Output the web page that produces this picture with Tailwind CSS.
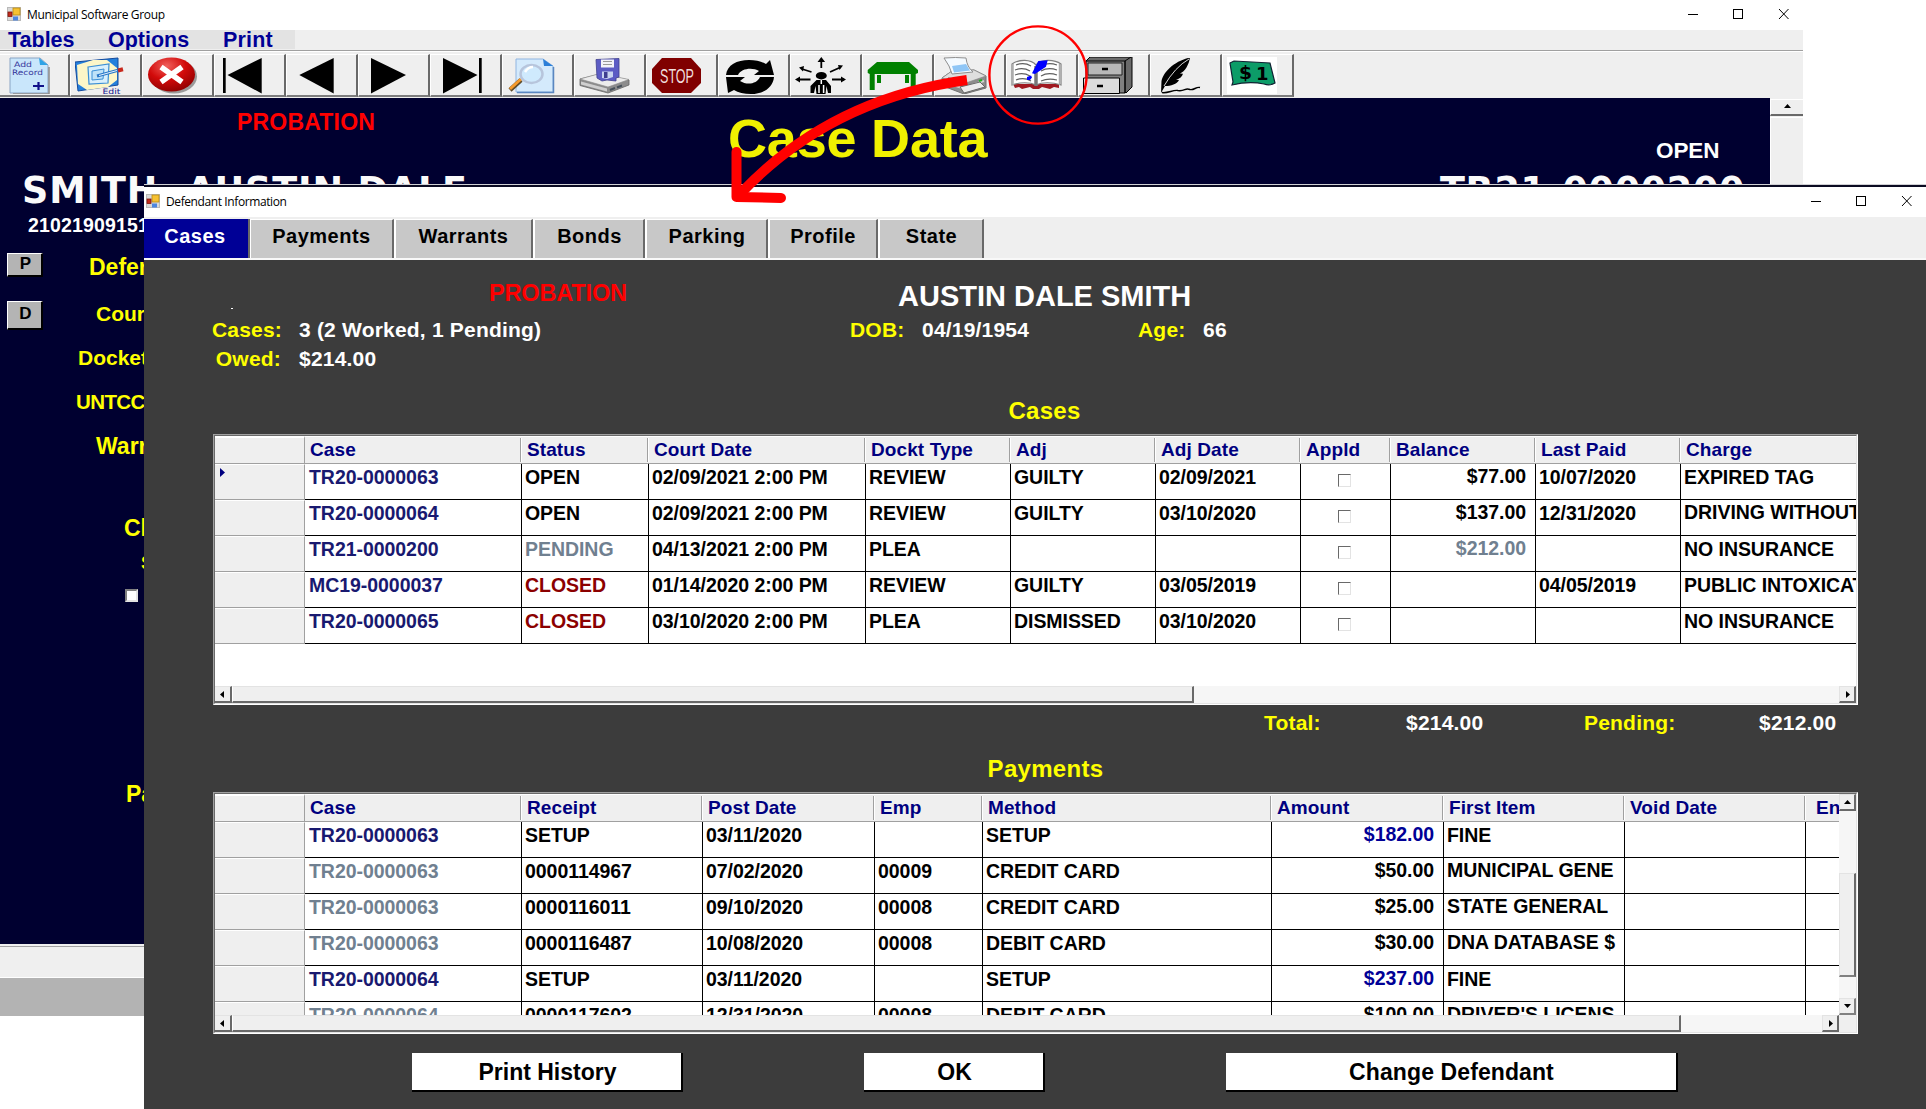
<!DOCTYPE html>
<html lang="en">
<head>
<meta charset="utf-8">
<title>Municipal Software Group</title>
<script src="https://cdn.jsdelivr.net/npm/@tailwindcss/browser@4"></script>
</head>
<body class="relative h-[1109px] w-[1926px] overflow-hidden bg-white font-['Liberation_Sans',Arial,sans-serif] font-bold whitespace-nowrap">

<!-- Main window -->
<section class="absolute left-0 top-0 flex h-[1016px] w-[1803px] flex-col overflow-hidden bg-white">
  <header class="flex h-[30px] shrink-0 items-center bg-white pl-[7px] font-['Open_Sans',sans-serif] text-[12px] font-normal text-black">
    <svg class="mb-[2px] h-[14px] w-[14px]" viewBox="0 0 14 14"><rect x=".5" y=".5" width="13" height="13" fill="#d8d8d8" stroke="#b9b9b9"/><rect x="6" y="1" width="7" height="7" fill="#f6c132" stroke="#b98a10" stroke-width=".8"/><rect x="1" y="5" width="4" height="4.500" fill="#c22a1c" stroke="#7f140c" stroke-width=".8"/><rect x="6" y="9.500" width="5" height="4" fill="#4d86e0"/></svg>
    <span class="ml-[6px] pb-[1px] tracking-[-0.34px]">Municipal Software Group</span>
    <svg class="mb-[3px] ml-auto mr-[14px] h-[12px] w-[102px]" viewBox="0 0 102 12" fill="none" stroke="#000" stroke-width="1"><path d="M1 6.500h10"/><rect x="46.500" y="1.500" width="9" height="9"/><path d="M92 1l9.500 10M101.500 1L92 11"/></svg>
  </header>
  <nav class="flex h-[20px] shrink-0 bg-[#efefef] text-[21.5px] leading-[21px] text-[#000096]">
    <div class="flex h-[19px] w-[295px] bg-[#e3e3e3]">
      <span class="ml-[8px] w-[100px]">Tables</span><span class="w-[115px]">Options</span><span class="tracking-[0.2px]">Print</span>
    </div>
  </nav>
  <div class="h-[2px] shrink-0 border-b border-t border-b-white border-t-[#a0a0a0]"></div>
  <div id="toolbar" class="flex h-[46px] shrink-0 bg-[#efefef] pt-[2px]">
  </div>

  <div class="flex h-[846px] shrink-0">
    <div class="flex w-[1770px] flex-col overflow-hidden bg-[#000030]">
      <div class="grid h-[72px] shrink-0 grid-cols-[237px_491px_928px_1fr]">
        <span></span>
        <span class="mt-[12px] text-[23px] leading-[24px] tracking-[0.2px] text-[#ff0000]">PROBATION</span>
        <h1 class="mt-[10px] text-[54px] leading-[60px] tracking-[-0.2px] text-[#f0f000]">Case Data</h1>
        <span class="mt-[41px] text-[22.5px] leading-[24px] tracking-[-0.1px] text-white">OPEN</span>
      </div>
      <div class="flex h-[44px] shrink-0 pl-[22px] pt-px font-['DejaVu_Sans',sans-serif] text-[36.5px] leading-[40px] text-[#fafafa]">
        <span class="w-[1418px] tracking-[0.9px]">SMITH, AUSTIN DALE</span><span class="tracking-[0.7px]">TR21-0000200</span>
      </div>
      <div class="pl-[28px] text-[19.5px] leading-[22px] tracking-[0.15px] text-white">210219091512</div>
      <div class="text-[#ffff00]">
        <div class="mt-[17px] flex h-[24px] pl-[7px]">
          <button class="h-[24px] w-[36px] border-b-2 border-r-2 border-b-black border-r-black border-l border-t border-l-white border-t-white bg-[#b4b4b4] pb-[2px] pl-[2px] text-[17px] leading-[17px] text-black">P</button>
          <span class="ml-[46px] pt-[2px] text-[23px] leading-[24px]">Defendant:</span>
        </div>
        <div class="mt-[24px] flex h-[29px] pl-[7px]">
          <button class="h-[29px] w-[36px] border-b-2 border-r-2 border-b-black border-r-black border-l border-t border-l-white border-t-white bg-[#b4b4b4] pb-[2px] pl-[2px] text-[17px] leading-[24px] text-black">D</button>
          <span class="ml-[53px] pt-px text-[21px] leading-[24px]">Court Date:</span>
        </div>
        <div class="mt-[16px] pl-[78px] text-[21px] leading-[24px]">Docket Type:</div>
        <div class="mt-[20px] pl-[76px] text-[20.5px] leading-[24px] tracking-[-0.6px]">UNTCC Number:</div>
        <div class="mt-[20px] pl-[96px] text-[23px] leading-[24px]">Warrant:</div>
        <div class="mt-[58px] pl-[124px] text-[23px] leading-[24px]">Charge:</div>
        <div class="mt-[13px] pl-[141px] text-[18px] leading-[20px]">Statute:</div>
        <div class="ml-[125px] mt-[16px] h-[13px] w-[13px] border-2 border-b-[#e3e3e3] border-l-[#808080] border-r-[#e3e3e3] border-t-[#808080] bg-white"></div>
        <div class="mt-[180px] pl-[126px] text-[23px] leading-[24px]">Payments:</div>
      </div>
    </div>
    <div class="flex w-[33px] flex-col bg-[#efefef] pt-[1px]">
      <div class="flex h-[17px] shrink-0 items-center justify-center border-b-2 border-l border-t border-b-[#696969] border-l-white border-t-white"><svg class="mb-[2px] h-[4px] w-[7px]" viewBox="0 0 7 4"><path d="M0 4L3.500 0 7 4z"/></svg></div>
      <div class="mt-[1px] grow border-l border-t border-white"></div>
    </div>
  </div>
  <div class="h-[3px] shrink-0 border-b border-b-[#a0a0a0] bg-[#efefef]"></div>
  <div class="h-[31px] shrink-0 border-b border-b-white bg-[#efefef]"></div>
  <div class="grow bg-[#b3b3b3]"></div>
</section>

<!-- Defendant window -->
<section class="absolute left-[144px] top-[184px] flex h-[925px] w-[1782px] flex-col overflow-hidden bg-[#3c3c3c]">
  <div class="h-[3px] shrink-0 border-t border-t-[#d0d0d4] bg-[#0b0b22]"></div>
  <header class="flex h-[30px] shrink-0 items-center bg-white pl-[2px] font-['Open_Sans',sans-serif] text-[12px] font-normal text-black">
    <svg class="mb-[2px] h-[14px] w-[14px]" viewBox="0 0 14 14"><rect x=".5" y=".5" width="13" height="13" fill="#d8d8d8" stroke="#b9b9b9"/><rect x="6" y="1" width="7" height="7" fill="#f6c132" stroke="#b98a10" stroke-width=".8"/><rect x="1" y="5" width="4" height="4.500" fill="#c22a1c" stroke="#7f140c" stroke-width=".8"/><rect x="6" y="9.500" width="5" height="4" fill="#4d86e0"/></svg>
    <span class="ml-[6px] pb-[1px] tracking-[-0.4px]">Defendant Information</span>
    <svg class="mb-[3px] ml-auto mr-[14px] h-[12px] w-[102px]" viewBox="0 0 102 12" fill="none" stroke="#000" stroke-width="1"><path d="M1 6.500h10"/><rect x="46.500" y="1.500" width="9" height="9"/><path d="M92 1l9.500 10M101.500 1L92 11"/></svg>
  </header>
  <nav class="flex h-[41px] shrink-0 items-start bg-[#efefef] pt-[2px] text-[20px] leading-[28px] tracking-[0.5px] text-black">
    <div class="h-[39px] w-[106px] border-r-2 border-r-[#696969] bg-[#000096] pr-[2px] pt-[3px] text-center text-white">Cases</div>
    <div class="h-[39px] w-[144px] border-l border-r-2 border-t border-l-white border-r-[#696969] border-t-white bg-[#c8c8c8] pt-[2px] text-center">Payments</div>
    <div class="h-[39px] w-[139px] border-l-2 border-r-2 border-t border-l-white border-r-[#696969] border-t-white bg-[#c8c8c8] pt-[2px] text-center">Warrants</div>
    <div class="h-[39px] w-[112px] border-l-2 border-r-2 border-t border-l-white border-r-[#696969] border-t-white bg-[#c8c8c8] pl-px pt-[2px] text-center">Bonds</div>
    <div class="h-[39px] w-[123px] border-l-2 border-r-2 border-t border-l-white border-r-[#696969] border-t-white bg-[#c8c8c8] pl-px pt-[2px] text-center">Parking</div>
    <div class="h-[39px] w-[110px] border-l-2 border-r-2 border-t border-l-white border-r-[#696969] border-t-white bg-[#c8c8c8] pt-[2px] text-center">Profile</div>
    <div class="h-[39px] w-[106px] border-l-2 border-r-2 border-t border-l-white border-r-[#696969] border-t-white bg-[#c8c8c8] pl-px pt-[2px] text-center">State</div>
  </nav>
  <div class="h-[2px] shrink-0 bg-[#f8f8f8]"></div>

  <div class="grid h-[58px] shrink-0 grid-cols-[87px_258px_409px_1fr] pt-[19px]">
    <span></span>
    <span class="mt-[29px] h-px w-[2px] bg-white"></span>
    <span class="mt-[2px] text-[23.5px] leading-[24px] tracking-[-0.15px] text-[#ff0000]">PROBATION</span>
    <span class="mt-px text-[29px] leading-[32px] text-white">AUSTIN DALE SMITH</span>
  </div>
  <div class="grid h-[29px] shrink-0 grid-cols-[138px_17px_551px_72px_216px_65px_1fr] text-[21px] leading-[24px] tracking-[0.2px] text-white">
    <span class="text-right text-[#ffff00]">Cases:</span><span></span><span>3 (2 Worked, 1 Pending)</span>
    <span class="text-[#ffff00]">DOB:</span><span>04/19/1954</span><span class="text-[#ffff00]">Age:</span><span>66</span>
  </div>
  <div class="grid h-[50px] shrink-0 grid-cols-[137px_18px_1fr] text-[21px] leading-[24px] tracking-[0.2px] text-white">
    <span class="text-right text-[#ffff00]">Owed:</span><span></span><span>$214.00</span>
  </div>
  <h2 class="h-[37px] shrink-0 pl-[19px] text-center text-[24px] leading-[28px] tracking-[0.3px] text-[#ffff00]">Cases</h2>

  <div class="ml-[69px] h-[271px] w-[1645px] shrink-0 border border-b-white border-l-[#a0a0a0] border-r-white border-t-[#a0a0a0]">
    <div class="flex h-full flex-col overflow-hidden border border-b-[#e3e3e3] border-l-[#696969] border-r-[#e3e3e3] border-t-[#696969] bg-white">
      <div id="cases" class="h-[250px] shrink-0 overflow-hidden"></div>
      <div class="flex h-[17px] shrink-0 bg-[#f6f6f6]">
        <div class="flex w-[17px] items-center justify-center border-b-2 border-r-2 border-t border-b-[#696969] border-r-[#696969] border-t-[#e3e3e3] bg-[#efefef]"><svg class="mr-[2px] h-[7px] w-[4px]" viewBox="0 0 4 7"><path d="M4 0v7L0 3.500z"/></svg></div>
        <div class="w-[962px] border-b-2 border-l border-r-2 border-t border-b-[#696969] border-l-white border-r-[#696969] border-t-[#e3e3e3] bg-[#efefef]"></div>
        <div class="ml-auto flex w-[17px] items-center justify-center border-b-2 border-l border-r-2 border-t border-b-[#696969] border-l-[#e3e3e3] border-r-[#696969] border-t-[#e3e3e3] bg-[#efefef]"><svg class="ml-[2px] h-[7px] w-[4px]" viewBox="0 0 4 7"><path d="M0 0v7l4-3.500z"/></svg></div>
      </div>
    </div>
  </div>

  <div class="grid h-[49px] shrink-0 grid-cols-[1120px_142px_178px_175px_1fr] pt-[6px] text-[21px] leading-[24px] tracking-[0.2px] text-white">
    <span></span><span class="text-[#ffff00]">Total:</span><span>$214.00</span><span class="text-[#ffff00]">Pending:</span><span>$212.00</span>
  </div>
  <h2 class="h-[38px] shrink-0 pl-[21px] pt-px text-center text-[24px] leading-[28px] tracking-[0.3px] text-[#ffff00]">Payments</h2>

  <div class="ml-[69px] h-[242px] w-[1645px] shrink-0 border border-b-white border-l-[#a0a0a0] border-r-white border-t-[#a0a0a0]">
    <div class="flex h-full flex-col overflow-hidden border border-b-[#e3e3e3] border-l-[#696969] border-r-[#e3e3e3] border-t-[#696969] bg-white">
      <div class="flex h-[221px] shrink-0">
        <div id="payments" class="w-[1624px] shrink-0 overflow-hidden"></div>
        <div class="flex w-[17px] flex-col bg-[#f6f6f6]">
          <div class="flex h-[17px] items-center justify-center border-b-2 border-l border-r-2 border-t border-b-[#696969] border-l-[#e3e3e3] border-r-[#696969] border-t-[#e3e3e3] bg-[#efefef]"><svg class="h-[4px] w-[7px]" viewBox="0 0 7 4"><path d="M0 4L3.500 0 7 4z"/></svg></div>
          <div class="mt-[62px] h-[104px] border-b-2 border-l border-r-2 border-t border-b-[#808080] border-l-[#e3e3e3] border-r-[#696969] border-t-[#e3e3e3] bg-[#efefef]"></div>
          <div class="mt-auto flex h-[17px] items-center justify-center border-b-2 border-l border-r-2 border-t border-b-[#808080] border-l-[#e3e3e3] border-r-[#808080] border-t-[#e3e3e3] bg-[#efefef]"><svg class="h-[4px] w-[7px]" viewBox="0 0 7 4"><path d="M0 0h7L3.500 4z"/></svg></div>
        </div>
      </div>
      <div class="flex h-[17px] shrink-0 bg-[#f6f6f6]">
        <div class="flex w-[17px] items-center justify-center border-b-2 border-r-2 border-t border-b-[#696969] border-r-[#696969] border-t-[#e3e3e3] bg-[#efefef]"><svg class="mr-[2px] h-[7px] w-[4px]" viewBox="0 0 4 7"><path d="M4 0v7L0 3.500z"/></svg></div>
        <div class="w-[1449px] border-b-2 border-l border-r-2 border-t border-b-[#696969] border-l-white border-r-[#696969] border-t-[#e3e3e3] bg-[#efefef]"></div>
        <div class="ml-auto flex w-[17px] items-center justify-center border-b-2 border-l border-r-2 border-t border-b-[#696969] border-l-[#e3e3e3] border-r-[#696969] border-t-[#e3e3e3] bg-[#efefef]"><svg class="ml-[2px] h-[7px] w-[4px]" viewBox="0 0 4 7"><path d="M0 0v7l4-3.500z"/></svg></div>
        <div class="w-[17px] bg-[#efefef]"></div>
      </div>
    </div>
  </div>

  <div class="flex shrink-0 pl-[268px] pt-[19px] text-[23px] leading-[35px] text-black">
    <button class="h-[39px] w-[271px] border-b-2 border-r-2 border-b-black border-r-black bg-white pl-[2px] pt-[2px]">Print History</button>
    <button class="ml-[181px] h-[39px] w-[181px] border-b-2 border-r-2 border-b-black border-r-black bg-white pl-[2px] pt-[2px]">OK</button>
    <button class="ml-[181px] h-[39px] w-[452px] border-b-2 border-r-2 border-b-black border-r-black bg-white pl-[1px] pt-[2px] tracking-[0.1px]">Change Defendant</button>
  </div>
</section>

<!-- Callout marks -->
<svg class="pointer-events-none absolute left-[720px] top-[10px] h-[210px] w-[380px]" viewBox="720 10 380 210" fill="none" stroke="#ff0000">
  <circle cx="1038" cy="75" r="48.600" stroke-width="2.400"/>
  <path d="M967 80Q830 99 741 193" stroke-width="10"/>
  <path d="M736.500 152v45l44.500 1" stroke-width="10" stroke-linecap="round" stroke-linejoin="round"/>
</svg>

<script>
// Toolbar glyphs, each drawn on a 50 x 37 grid
const icons = [
  `<path d="M7 1h30l8 7v28H7z" fill="#c9e6fb" stroke="#8aa4c4"/><path d="M46 10v27H10" stroke="#8a8a8a" stroke-width="1.500" fill="none"/><path d="M36 1l1 7h8z" fill="#2ea3e6"/><g fill="#35359a" font-weight="400" font-family="DejaVu Sans"><text x="11" y="9.500" font-size="7.500" textLength="18" lengthAdjust="spacingAndGlyphs">Add</text><text x="9" y="17.500" font-size="7.500" textLength="31" lengthAdjust="spacingAndGlyphs">Record</text></g><path d="M30 29h11M35.500 25v8" stroke="#10108a" stroke-width="2.200"/>`,
  `<path d="M0 5L43 1v27L3 34z" fill="#2580dc" stroke="#144a9c"/><path d="M2 8L18 3h14l10 8v12l-9 7-21 3-9-6z" fill="#fdf6c8"/><path d="M13 10l21-3-1 19-19 1z" fill="#d8effc" stroke="#3b8fd6" stroke-width="1.200"/><path d="M17 14l12-2-1 10-11 1z" fill="#bfe2f8" stroke="#3b8fd6"/><path d="M22 19l22-6" stroke="#2a78c8" stroke-width="3"/><path d="M24 18.500l18-5" stroke="#e4f3ff"/><path d="M43 13.500l5-1.200" stroke="#c8281c" stroke-width="4"/><text x="27.500" y="36.700" font-size="7.500" font-family="DejaVu Sans" font-weight="400" fill="#10108a" textLength="18" lengthAdjust="spacingAndGlyphs">Edit</text>`,
  `<defs><radialGradient id="rg" cx=".4" cy=".25" r=".8"><stop offset="0" stop-color="#f0605c"/><stop offset=".5" stop-color="#d20a0a"/><stop offset="1" stop-color="#8c0000"/></radialGradient></defs><ellipse cx="27" cy="19.500" rx="23" ry="17" fill="#9a9a9a"/><ellipse cx="24.500" cy="17.500" rx="23.500" ry="17" fill="url(#rg)"/><path d="M14 10l21 15M35 10L14 25" stroke="#fff" stroke-width="5.500"/>`,
  `<path d="M4 1h2.700v35H4zM42.700 1v35.500L8.500 18z"/>`,
  `<path d="M42.700 1v35.500L8.300 18z"/>`,
  `<path d="M8 1v35.500L43 18z"/>`,
  `<path d="M8 1v35.500L42.500 18zM44 1h2.700v35H44z"/>`,
  `<path d="M9 2h27l10 7v26H9z" fill="#d4eafc" stroke="#8fb4e0"/><path d="M46.500 10v25.500H10" stroke="#5a86c0" stroke-width="1.500" fill="none"/><path d="M36 2l1 7h9z" fill="#2b7fd8"/><path d="M14 23L3 33" stroke="#5c4a2a" stroke-width="4.500"/><path d="M14 22L3 32" stroke="#f59a2c" stroke-width="3"/><ellipse cx="24.500" cy="17" rx="11" ry="9" fill="#cfeafd" stroke="#b7c5dc" stroke-width="2.500"/><path d="M18 15q3-5 8-5" stroke="#fff" stroke-width="2.500" fill="none"/>`,
  `<path d="M1 22l20-5 29 6v5L29 36 1 28.500z" fill="#8c8c8c" stroke="#666" stroke-width=".8"/><path d="M1 22l20-5.500 29 6L29 30z" fill="#ececec" stroke="#888" stroke-width=".6"/><path d="M2 24.500l26 7v3L2 27.500z" fill="#cfcfcf"/><path d="M31 33l5-2M38 30.500l5-2" stroke="#46505a" stroke-width="2"/><path d="M17 2.500l23-1V20l-3 1v3l-9-1-5 1-5-3z" fill="#5c5cc4" stroke="#40408e" stroke-width=".8"/><path d="M22 2.500h13v8H22z" fill="#f2f2f8"/><path d="M24 4.500h9M24 7.500h9" stroke="#999"/><path d="M23 14.500h11V20l-6 2-5-1z" fill="#c8d4f0"/><path d="M25 15h3.500v6H25z" fill="#3e3e90"/>`,
  `<path d="M11 1h29l10 11v14L40 36H11L1 26V12z" fill="#800000"/><text x="9" y="25.500" font-size="21" fill="#f0dede" font-weight="400" font-family="Liberation Sans" textLength="34" lengthAdjust="spacingAndGlyphs">STOP</text>`,
  `<path d="M3 18C4 8 14 3 26 3c7 0 13 1.500 17 4l4-4 4 15H31l5-4c-6-4-18-3-21 4z"/><path d="M51 20C50 31 40 37 28 37c-7 0-13-1.500-17-4l-6 3-2-16h19l-5 4c7 4.500 17 3 20-4z"/>`,
  `<g stroke="#000" stroke-width="1.800" fill="none"><path d="M26.300 3v8M3 22.500h12.500M37 22.500h12M7 12l9.500 3M35 15l10-4.500"/></g><path d="M22.500 5l3.800-5 3.800 5zM5 19.500v6L0 22.500zM46 19.500v6l5-3zM9 9l-5 1.500 4 4zM43 8l5 .5-3.500 4.500z"/><ellipse cx="26.300" cy="18.700" rx="5.500" ry="3.700"/><path d="M21.500 23h9.500l5 6v7h-3l-1.500-7-1 8h-9l-1-8-1.500 7h-3.500v-7z"/><path d="M26.300 23v4M24 28v8M28.600 28v8" stroke="#fff" stroke-width="1.500"/>`,
  `<path d="M.7 16V13L10 5h32l9 8v3l-2.300 1V33h-5V17h-36v16h-5V17zM10 18h4v8h-4zM38 18h4v8h-4z" fill="#008000"/>`,
  `<path d="M3 21l10-7 22-1 12 6v12l-22 6L4 29z" fill="#8c8c8c" stroke="#707070"/><path d="M3 21l10-7 22-1 12 6-23 8z" fill="#dedede" stroke="#888" stroke-width=".7"/><path d="M5 1q12-1 22 0 1 9 7 14l-21 2Q11 9 5 1z" fill="#f4faff" stroke="#8f8f8f"/><path d="M13 9l14-2 4 6.500-16 2z" fill="#8fc6f6"/><path d="M9 21l15 3.500" stroke="#777" stroke-width="1.500"/><path d="M5 25l18 6 22-7" stroke="#d4d4d4" stroke-width="2" fill="none"/><path d="M21 30l20-5 5 5-21 6z" fill="#ececec" stroke="#666"/><path d="M40 24l3-1" stroke="#20b020" stroke-width="2"/>`,
  `<path d="M2 27h46v4l-5-1-4 2-8-2-3 2h-6l-3-2-8 2-3-2-4 1z" fill="#a01820"/><path d="M25 8C20 2 8 2 1 7v21c8-3 18-3 24 0 6-3 16-3 25 0V7C43 2 30 2 25 8z" fill="#fff" stroke="#808080" stroke-width="1.200"/><path d="M5 8q8-3 15 1M4 13q8-3 15 1M4 18q8-3 15 1M5 23q8-3 15 1M30 9q7-4 16-1M30 14q7-4 16-1M30 19q7-4 16-1M30 24q7-3 16-1" fill="none" stroke="#606060" stroke-width="1.200"/><path d="M2 28V7M48.500 28V7" stroke="#aaa" stroke-width="1.500"/><path d="M25 9v20" stroke="#777" stroke-width="3.500"/><path d="M27.300 4l9.400-.7-1.700 6.400L24 17l-3-.7zM16 20l4-1.500 1 2-2 2.500h-3z" fill="#0000ff"/>`,
  `<path d="M3 4l4-4h42v30l-6 6z" fill="#6a6a6a" stroke="#000"/><path d="M3 4h39v32H3z" fill="#808080" stroke="#000"/><path d="M5 6h34v12H5z" fill="#b8b8b8" stroke="#222"/><path d="M.5 21h36v15.500H.5z" fill="#dcdcdc" stroke="#000"/><path d="M19 12h6M14 29h6" stroke="#000" stroke-width="2.600"/><path d="M42 4l6-4M42 36V4" stroke="#000"/>`,
  `<path d="M35.500.5C22 3 9 13 6.500 24L6 36l4-7c6 0 12-2 14-6l-3-.3c4-1 6-3 7-6l-3-.2c5-2 9-9 10-16z"/><path d="M34 2Q20 10 9 29" stroke="#efefef" stroke-width=".9" fill="none"/><path d="M7 35.500c6 1 11-3 16-2 7 1 7-3 12-1 4 1 6-3 10-2" stroke="#000" stroke-width="1.500" fill="none"/>`,
  `<rect width="50" height="37" fill="#fff"/><path d="M3 6l4-2q18 1 36 2l5 20q-5 3-11 1-15-3-32 1l1-3z" fill="#0c9c68" stroke="#123" stroke-width="1.200"/><g font-size="18" font-family="DejaVu Sans" font-weight="700"><text x="12" y="22" textLength="13" lengthAdjust="spacingAndGlyphs">$</text><text x="29" y="22.500">1</text></g>`
];
document.getElementById('toolbar').innerHTML = icons.map((g, i) =>
  `<div class="${i ? 'w-[72px] pl-[4px] border-l' : 'w-[70px] pl-[3px]'} h-[43px] shrink-0 border-b-2 border-r-2 border-t border-b-[#7d7d7d] border-l-white border-r-[#696969] border-t-white pt-[2px]"><svg class="h-[37px] w-[52px]" viewBox="0 0 52 37">${g}</svg></div>`).join('');

const tone = { n: 'text-[#191970]', g: 'text-[#708090]', r: 'text-[#8b0000]', b: 'text-[#000096]', k: 'text-black' };

function grid(id, widths, heads, rows, amountCol, marker) {
  const head = `<div class="flex h-[28px] border-b border-b-[#a0a0a0] bg-[#efefef] text-[19px] leading-[27px] tracking-[0.1px] text-[#000080]">
    <div class="w-[90px] shrink-0 border-r border-t-2 border-r-[#a0a0a0] border-t-white bg-[#efefef]"></div>` +
    heads.map((h, i) => `<div class="flex shrink-0 justify-between border-t border-t-white" style="width:${widths[i]}px"><span class="${h === 'En' ? 'pl-[10px]' : 'pl-[5px]'} -mt-px">${h}</span><span class="mt-px h-[24px] w-[2px] border-l border-r border-l-[#a0a0a0] border-r-white"></span></div>`).join('') + `</div>`;
  const body = rows.map((r, ri) => `<div class="flex h-[36px] text-[19.5px] leading-[22px] tracking-[-0.05px]">
    <div class="w-[90px] shrink-0 border-b border-r border-t border-b-[#a0a0a0] border-r-[#a0a0a0] border-t-white bg-[#efefef] pl-[5px] pt-[3px]">${marker && !ri ? '<svg class="h-[9px] w-[5px]" viewBox="0 0 5 9"><path d="M0 0v9l5-4.500z" fill="#000080"/></svg>' : ''}</div>` +
    r.map((c, i) => {
      const [t, k = i ? 'k' : 'n', up] = Array.isArray(c) ? c : [c];
      const inner = t === '#' ? '<div class="ml-[34px] mt-[8px] h-[13px] w-[13px] border border-b-[#e3e3e3] border-l-[#696969] border-r-[#e3e3e3] border-t-[#696969] bg-white"></div>' : t;
      return `<div class="${tone[k]} ${i === amountCol ? 'pt-px pr-[9px] text-right' : up ? 'pl-[3px] pt-px' : i ? 'pl-[3px] pt-[2px]' : 'pl-[4px] pt-[2px]'} shrink-0 overflow-hidden border-b border-r border-black" style="width:${widths[i]}px">${inner}</div>`;
    }).join('') + `</div>`).join('');
  document.getElementById(id).innerHTML = head + body;
}

grid('cases', [217, 127, 217, 145, 145, 145, 90, 145, 145, 290],
  ['Case', 'Status', 'Court Date', 'Dockt Type', 'Adj', 'Adj Date', 'Appld', 'Balance', 'Last Paid', 'Charge'],
  [
    ['TR20-0000063', 'OPEN', '02/09/2021 2:00 PM', 'REVIEW', 'GUILTY', '02/09/2021', '#', '$77.00', '10/07/2020', 'EXPIRED TAG'],
    ['TR20-0000064', 'OPEN', '02/09/2021 2:00 PM', 'REVIEW', 'GUILTY', '03/10/2020', '#', '$137.00', '12/31/2020', ['DRIVING WITHOUT LICENSE', 'k', 1]],
    ['TR21-0000200', ['PENDING', 'g'], '04/13/2021 2:00 PM', 'PLEA', '', '', '#', ['$212.00', 'g'], '', 'NO INSURANCE'],
    ['MC19-0000037', ['CLOSED', 'r'], '01/14/2020 2:00 PM', 'REVIEW', 'GUILTY', '03/05/2019', '#', '', '04/05/2019', 'PUBLIC INTOXICATION'],
    ['TR20-0000065', ['CLOSED', 'r'], '03/10/2020 2:00 PM', 'PLEA', 'DISMISSED', '03/10/2020', '#', '', '', 'NO INSURANCE']
  ], 7, true);

grid('payments', [217, 181, 172, 108, 289, 172, 181, 181, 181],
  ['Case', 'Receipt', 'Post Date', 'Emp', 'Method', 'Amount', 'First Item', 'Void Date', 'En'],
  [
    ['TR20-0000063', 'SETUP', '03/11/2020', '', 'SETUP', ['$182.00', 'b'], 'FINE', '', ''],
    [['TR20-0000063', 'g'], '0000114967', '07/02/2020', '00009', 'CREDIT CARD', '$50.00', ['MUNICIPAL GENE', 'k', 1], '', ''],
    [['TR20-0000063', 'g'], '0000116011', '09/10/2020', '00008', 'CREDIT CARD', '$25.00', ['STATE GENERAL', 'k', 1], '', ''],
    [['TR20-0000063', 'g'], '0000116487', '10/08/2020', '00008', 'DEBIT CARD', '$30.00', ['DNA DATABASE $', 'k', 1], '', ''],
    ['TR20-0000064', 'SETUP', '03/11/2020', '', 'SETUP', ['$237.00', 'b'], 'FINE', '', ''],
    [['TR20-0000064', 'g'], '0000117602', '12/31/2020', '00008', 'DEBIT CARD', '$100.00', ["DRIVER'S LICENS", 'k', 1], '', '']
  ], 5, false);
</script>
</body>
</html>
